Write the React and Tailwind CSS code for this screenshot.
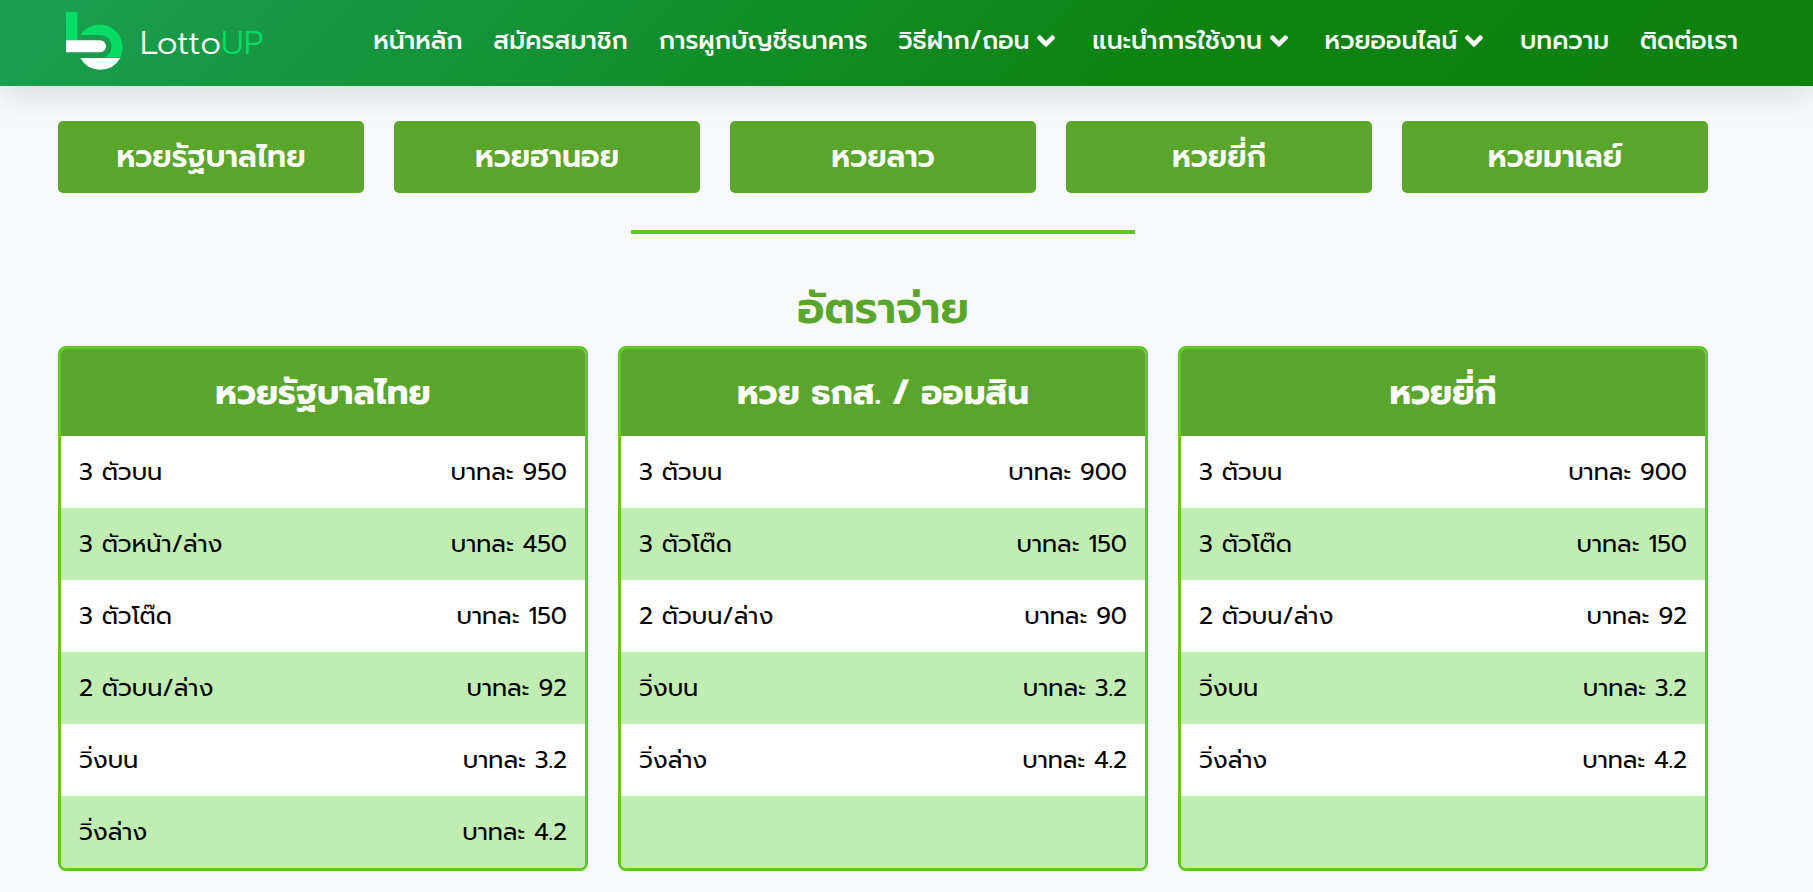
import { FaAngleDown } from "react-icons/fa";

const NAV_ITEMS = [
  { label: "หน้าหลัก" },
  { label: "สมัครสมาชิก" },
  { label: "การผูกบัญชีธนาคาร" },
  { label: "วิธีฝาก/ถอน", hasMenu: true },
  { label: "แนะนำการใช้งาน", hasMenu: true },
  { label: "หวยออนไลน์", hasMenu: true },
  { label: "บทความ" },
  { label: "ติดต่อเรา" },
];

const CATEGORIES = ["หวยรัฐบาลไทย", "หวยฮานอย", "หวยลาว", "หวยยี่กี", "หวยมาเลย์"];

const RATE_TABLES = [
  {
    title: "หวยรัฐบาลไทย",
    rows: [
      ["3 ตัวบน", "บาทละ 950"],
      ["3 ตัวหน้า/ล่าง", "บาทละ 450"],
      ["3 ตัวโต๊ด", "บาทละ 150"],
      ["2 ตัวบน/ล่าง", "บาทละ 92"],
      ["วิ่งบน", "บาทละ 3.2"],
      ["วิ่งล่าง", "บาทละ 4.2"],
    ],
  },
  {
    title: "หวย ธกส. / ออมสิน",
    rows: [
      ["3 ตัวบน", "บาทละ 900"],
      ["3 ตัวโต๊ด", "บาทละ 150"],
      ["2 ตัวบน/ล่าง", "บาทละ 90"],
      ["วิ่งบน", "บาทละ 3.2"],
      ["วิ่งล่าง", "บาทละ 4.2"],
      ["", ""],
    ],
  },
  {
    title: "หวยยี่กี",
    rows: [
      ["3 ตัวบน", "บาทละ 900"],
      ["3 ตัวโต๊ด", "บาทละ 150"],
      ["2 ตัวบน/ล่าง", "บาทละ 92"],
      ["วิ่งบน", "บาทละ 3.2"],
      ["วิ่งล่าง", "บาทละ 4.2"],
      ["", ""],
    ],
  },
];

function Logo() {
  return (
    <a href="#" className="flex shrink-0 items-center gap-4">
      <svg width="58" height="58" viewBox="0 0 58 58" aria-hidden="true">
        <path d="M0 0H11.5V28H0Z" fill="#04dc64" />
        <path
          d="M14.3 23A23 23 0 0 1 54.3 45.5H37C42 44.5 45.5 40 45.5 34.3C45.5 28 41 23 34 23Z"
          fill="#04dc64"
        />
        <path d="M0 28.3H34A6 6 0 0 1 34 40.3H0Z" fill="#fff" />
        <path d="M14.3 46H54.3A23 23 0 0 1 14.3 46Z" fill="#fff" />
      </svg>
      <span className="pt-1 text-[33px] leading-10 font-light text-white">
        Lotto<span className="text-[#04dc64]">UP</span>
      </span>
    </a>
  );
}

function Header() {
  return (
    <header className="relative flex h-[86px] items-center bg-[linear-gradient(135deg,#1a9f54_0%,#0d8311_63%,#0e8110_100%)] pr-[75px] pb-1 pl-[66px] shadow-[0_10px_35px_rgba(0,0,0,0.12)]">
      <Logo />
      <nav className="ml-[110px] flex flex-1 items-center justify-between">
        {NAV_ITEMS.map((item) => (
          <a
            key={item.label}
            href="#"
            className={`flex items-center gap-2 text-[25px] leading-10 font-medium whitespace-nowrap text-white ${item.hasMenu ? "pr-[6px]" : ""}`}
          >
            {item.label}
            {item.hasMenu && <FaAngleDown className="h-[30px] w-[18px]" />}
          </a>
        ))}
      </nav>
    </header>
  );
}

function RateTable({ title, rows }) {
  return (
    <div className="overflow-hidden rounded-lg border-3 border-[#60c823]">
      <table className="w-full text-2xl text-black">
        <thead>
          <tr className="h-[87px] bg-[#5aa52b] text-white">
            <th colSpan={2} className="text-center text-[34px] font-bold">
              {title}
            </th>
          </tr>
        </thead>
        <tbody>
          {rows.map(([name, rate], index) => (
            <tr key={index} className="h-[72px] bg-white even:bg-[#c1edb2]">
              <td className="pl-[18px]">{name}</td>
              <td className="pr-[18px] text-right">{rate}</td>
            </tr>
          ))}
        </tbody>
      </table>
    </div>
  );
}

function App() {
  return (
    <div className="min-h-screen bg-[#f7f9fb] font-['Prompt','Noto_Sans_Thai','Noto_Sans',sans-serif]">
      <Header />
      <main className="pt-[35px] pr-[105px] pb-5 pl-[58px]">
        <div className="grid grid-cols-5 gap-[30px]">
          {CATEGORIES.map((name) => (
            <button
              key={name}
              type="button"
              className="relative h-[72px] rounded-[5px] bg-[#5aa52b] text-[30px] font-semibold text-white"
            >
              {name}
            </button>
          ))}
        </div>

        <hr className="mx-auto mt-[37px] w-[504px] border-t-4 border-[#60c823]" />

        <h2 className="mt-[43px] mb-[5px] text-center text-[44px] leading-16 font-semibold text-[#5aa52b]">
          อัตราจ่าย
        </h2>

        <div className="grid grid-cols-3 gap-[30px]">
          {RATE_TABLES.map((table) => (
            <RateTable key={table.title} title={table.title} rows={table.rows} />
          ))}
        </div>
      </main>
    </div>
  );
}

export default App;
